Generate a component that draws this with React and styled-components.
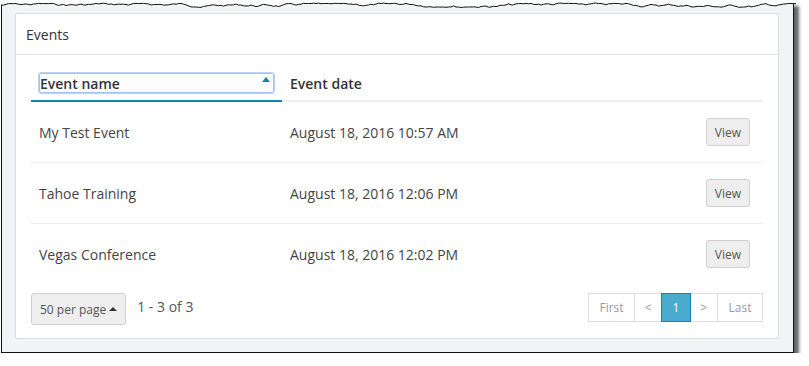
import React from 'react';
import styled, { createGlobalStyle } from 'styled-components';

const GlobalStyle = createGlobalStyle`
  html, body {
    margin: 0;
    padding: 0;
    background: #ffffff;
  }
  body {
    font-family: 'Open Sans', 'Liberation Sans', sans-serif;
    color: #444;
  }
`;

const Frame = styled.div`
  position: relative;
  box-sizing: border-box;
  width: 793px;
  height: 351px;
  margin: 2px 0 0 1px;
  padding: 11px 14px 12px 13px;
  background: #f3f4f6;
  border: 1px solid #111;
  border-top: none;
  box-shadow: 5px 4px 3px rgba(0, 0, 0, 0.6);
`;

const TornEdge = styled.svg`
  position: absolute;
  top: 0;
  left: -1px;
  width: 795px;
  height: 8px;
  overflow: visible;
`;

const Card = styled.div`
  background: #ffffff;
  border: 1px solid #dcdde0;
  border-radius: 2px;
`;

const CardHeader = styled.div`
  height: 40px;
  display: flex;
  align-items: center;
  padding: 0 10px;
  border-bottom: 1px solid #e3e4e6;
  font-size: 14px;
  color: #333;
`;

const CardBody = styled.div`
  padding: 10px 15px 13px;
`;

const Table = styled.table`
  width: 100%;
  border-collapse: collapse;
  font-size: 14px;
`;

const Th = styled.th`
  text-align: left;
  font-weight: 600;
  color: #333;
  padding: 8px 8px 7px;
  border-bottom: 2px solid ${p => (p.$active ? '#0b84ad' : '#eeeeee')};
  width: ${p => p.$width || 'auto'};
`;

const SortLabel = styled.div`
  position: relative;
  height: 20px;
  line-height: 19px;
  box-sizing: border-box;
  border: 1px solid #9ec3fb;
  outline: 1px solid #b9d4fc;
  border-radius: 2px;
`;

const SortArrow = styled.span`
  position: absolute;
  right: 3px;
  top: 3px;
  width: 0;
  height: 0;
  border-left: 4px solid transparent;
  border-right: 4px solid transparent;
  border-bottom: 5px solid #1a7fb0;
`;

const Td = styled.td`
  height: 60px;
  padding: 0 8px;
  color: #444;
  border-top: ${p => (p.$first ? 'none' : '1px solid #eeeeee')};
  text-align: ${p => (p.$right ? 'right' : 'left')};
  padding-right: ${p => (p.$right ? '13px' : '8px')};
`;

const Button = styled.button`
  font-family: inherit;
  font-size: 12px;
  color: #555;
  background: #eeeeee;
  border: 1px solid #cfcfcf;
  border-radius: 3px;
  height: 28px;
  padding: 0 8px;
  cursor: pointer;
`;

const Footer = styled.div`
  display: flex;
  align-items: flex-start;
  justify-content: space-between;
  margin-top: 9px;
`;

const FooterLeft = styled.div`
  display: flex;
  align-items: flex-start;
  gap: 11px;
`;

const PerPage = styled(Button)`
  height: 32px;
  padding: 0 8px;
  display: flex;
  align-items: center;
  gap: 3px;
`;

const Caret = styled.span`
  width: 0;
  height: 0;
  border-left: 4px solid transparent;
  border-right: 4px solid transparent;
  border-bottom: 4px solid #333;
  margin-bottom: 1px;
`;

const Count = styled.span`
  font-size: 14px;
  color: #555;
  line-height: 20px;
  padding-top: 4px;
`;

const Pager = styled.div`
  display: flex;
`;

const PageItem = styled.span`
  box-sizing: border-box;
  height: 29px;
  min-width: ${p => p.$w}px;
  display: flex;
  align-items: center;
  justify-content: center;
  font-size: 12px;
  color: ${p => (p.$active ? '#ffffff' : '#9a9a9a')};
  background: ${p => (p.$active ? '#4aaacf' : '#ffffff')};
  border: 1px solid ${p => (p.$active ? '#1a86ae' : '#dddddd')};
  margin-left: -1px;
  position: relative;
  z-index: ${p => (p.$active ? 1 : 0)};
`;

const events = [
  { name: 'My Test Event', date: 'August 18, 2016 10:57 AM' },
  { name: 'Tahoe Training', date: 'August 18, 2016 12:06 PM' },
  { name: 'Vegas Conference', date: 'August 18, 2016 12:02 PM' },
];

const pages = [
  { label: 'First', w: 47 },
  { label: '<', w: 28 },
  { label: '1', w: 30, active: true },
  { label: '>', w: 28 },
  { label: 'Last', w: 46 },
];

function tornPoints() {
  let seed = 7;
  const rnd = () => {
    seed = (seed * 9301 + 49297) % 233280;
    return seed / 233280;
  };
  const pts = [];
  let y = 3;
  for (let x = 0; x <= 795; x += 2.5) {
    y += (rnd() - 0.5) * 2.2;
    if (y < 1) y = 1.5;
    if (y > 5.5) y = 5;
    pts.push(`${x.toFixed(1)},${y.toFixed(1)}`);
  }
  return pts;
}

export default function App() {
  const pts = tornPoints();
  return (
    <>
      <GlobalStyle />
      <Frame>
        <TornEdge viewBox="0 0 795 8" preserveAspectRatio="none">
          <polygon points={`0,-4 ${pts.join(' ')} 795,-4`} fill="#ffffff" />
          <polyline points={pts.join(' ')} fill="none" stroke="#111" strokeWidth="1" />
        </TornEdge>
        <Card>
          <CardHeader>Events</CardHeader>
          <CardBody>
            <Table>
              <thead>
                <tr>
                  <Th $active $width="235px">
                    <SortLabel>
                      Event name
                      <SortArrow />
                    </SortLabel>
                  </Th>
                  <Th>Event date</Th>
                  <Th />
                </tr>
              </thead>
              <tbody>
                {events.map((e, i) => (
                  <tr key={e.name}>
                    <Td $first={i === 0}>{e.name}</Td>
                    <Td $first={i === 0}>{e.date}</Td>
                    <Td $first={i === 0} $right>
                      <Button>View</Button>
                    </Td>
                  </tr>
                ))}
              </tbody>
            </Table>
            <Footer>
              <FooterLeft>
                <PerPage>
                  50 per page <Caret />
                </PerPage>
                <Count>1 - 3 of 3</Count>
              </FooterLeft>
              <Pager>
                {pages.map(p => (
                  <PageItem key={p.label} $w={p.w} $active={p.active}>
                    {p.label}
                  </PageItem>
                ))}
              </Pager>
            </Footer>
          </CardBody>
        </Card>
      </Frame>
    </>
  );
}
